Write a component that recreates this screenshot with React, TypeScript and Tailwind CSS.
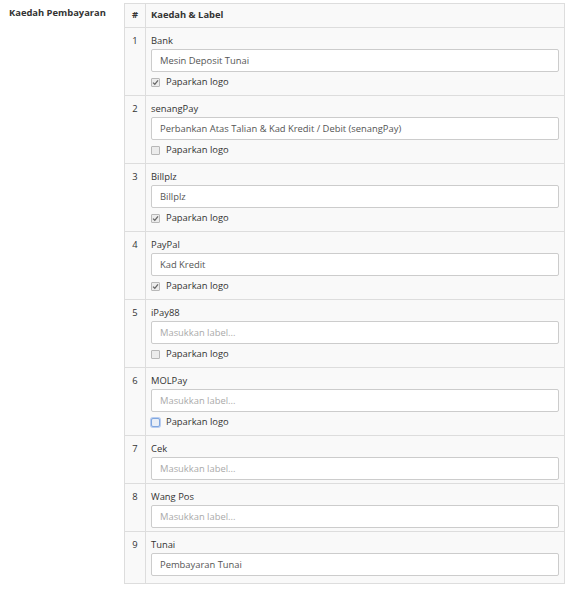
import React from 'react';

type Method = {
  name: string;
  value: string;
  logo?: boolean | null;
  focus?: boolean;
};

const methods: Method[] = [
  { name: 'Bank', value: 'Mesin Deposit Tunai', logo: true },
  { name: 'senangPay', value: 'Perbankan Atas Talian & Kad Kredit / Debit (senangPay)', logo: false },
  { name: 'Billplz', value: 'Billplz', logo: true },
  { name: 'PayPal', value: 'Kad Kredit', logo: true },
  { name: 'iPay88', value: '', logo: false },
  { name: 'MOLPay', value: '', logo: false, focus: true },
  { name: 'Cek', value: '', logo: null },
  { name: 'Wang Pos', value: '', logo: null },
  { name: 'Tunai', value: 'Pembayaran Tunai', logo: null },
];

const CheckBox: React.FC<{ checked: boolean; focus?: boolean }> = ({ checked, focus }) => {
  if (focus) {
    return (
      <span className="w-[9px] h-[9px] rounded-[2px] border border-[#7fa7e0] bg-[#e9eef6] shadow-[0_0_0_1px_#b9cdf0] inline-block" />
    );
  }
  return (
    <span className="w-[9px] h-[9px] rounded-[1px] border border-[#b8b8b8] bg-[#ececec] inline-flex items-center justify-center">
      {checked && (
        <svg width="7" height="7" viewBox="0 0 7 7">
          <path d="M1 3.6 L2.8 5.3 L6 1.3" stroke="#666" strokeWidth="1.3" fill="none" />
        </svg>
      )}
    </span>
  );
};

const App: React.FC = () => {
  return (
    <div className="w-[572px] h-[593px] bg-white flex text-[#333]" style={{ fontFamily: '"Open Sans", "Liberation Sans", sans-serif' }}>
      <div className="w-[124px] shrink-0 pl-[9px] pt-[5px] text-[9.4px] font-bold leading-[16px]">Kaedah Pembayaran</div>
      <table className="mt-[3px] w-[441px] border-collapse bg-[#f9f9f9] self-start text-[9.4px]">
        <thead>
          <tr className="h-[24px]">
            <th className="w-[21px] border border-[#ddd] text-center font-bold">#</th>
            <th className="border border-[#ddd] text-left font-bold pl-[5px]">Kaedah &amp; Label</th>
          </tr>
        </thead>
        <tbody>
          {methods.map((m, i) => (
            <tr key={m.name}>
              <td className="border border-[#ddd] align-top text-center pt-[5px] leading-[16px]">{i + 1}</td>
              <td className={`border border-[#ddd] align-top pt-[5px] pl-[5px] pr-[5px] ${i === methods.length - 1 ? 'pb-[6px]' : 'pb-[2px]'}`}>
                <div className="leading-[16px] h-[16px]">{m.name}</div>
                <input
                  readOnly
                  value={m.value}
                  placeholder="Masukkan label..."
                  className="block w-full h-[23px] bg-white border border-[#ccc] rounded-[2px] px-[8px] text-[9.4px] text-[#555] placeholder:text-[#aaa] outline-none"
                />
                {m.logo !== null && m.logo !== undefined ? (
                  <div className="h-[21px] flex items-center gap-[6px] pb-[1px]">
                    <CheckBox checked={m.logo} focus={m.focus} />
                    <span className="leading-[16px]">Paparkan logo</span>
                  </div>
                ) : (
                  <div className="h-[1px]" />
                )}
              </td>
            </tr>
          ))}
        </tbody>
      </table>
    </div>
  );
};

export default App;
